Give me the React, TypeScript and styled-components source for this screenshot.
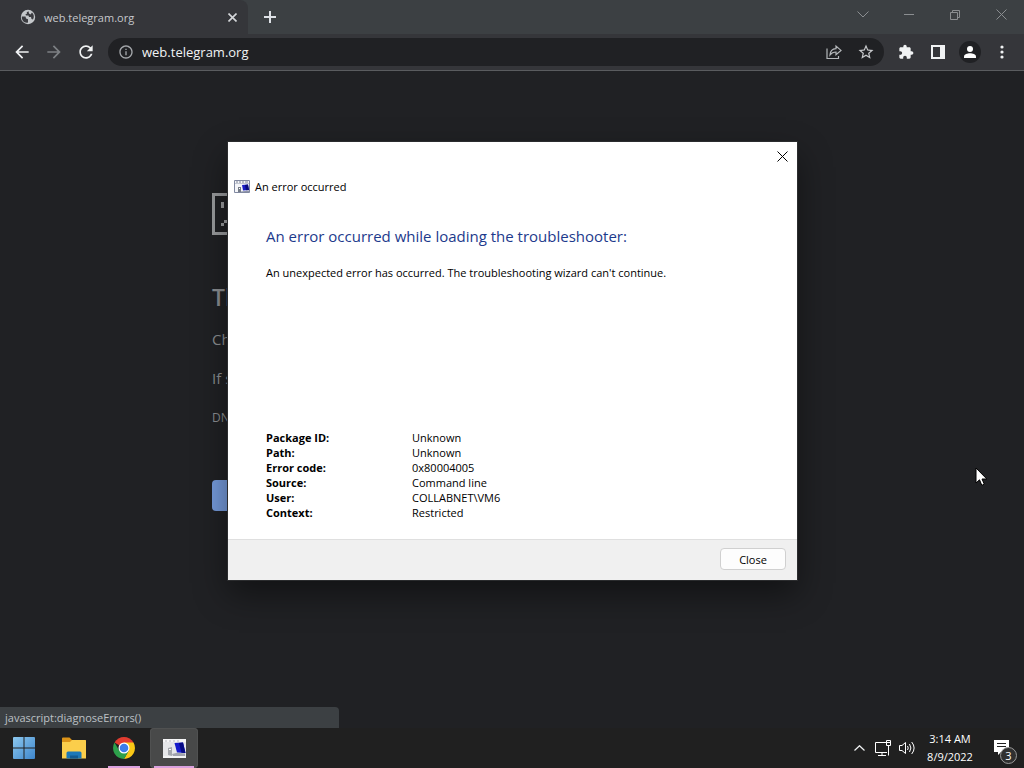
import React from "react";
import styled, { createGlobalStyle } from "styled-components";

const GlobalStyle = createGlobalStyle`
  * { box-sizing: border-box; }
  body {
    margin: 0;
    background: #202124;
    font-family: "Open Sans", "Noto Sans", sans-serif;
    font-size: 11px;
  }
  button { font: inherit; color: inherit; }
  svg { display: block; flex: none; }
`;

const Desktop = styled.div`
  position: relative;
  display: flex;
  flex-direction: column;
  min-height: 100vh;
  overflow: hidden;
`;

const Browser = styled.div`
  position: relative;
  flex: 1;
  display: flex;
  flex-direction: column;
  background: #202124;
`;

const TabStrip = styled.header`
  display: flex;
  height: 34px;
  background: #3c4043;
  color: #dee1e6;
`;

const Tab = styled.div`
  display: flex;
  align-items: center;
  gap: 8px;
  width: 248px;
  padding: 0 8px 0 20px;
  border-radius: 0 8px 0 0;
  background: #35363a;
  color: #c6c8cb;
`;

const TabTitle = styled.span`
  flex: 1;
`;

const IconButton = styled.button<{ $w?: number; $h?: number; $color?: string }>`
  display: flex;
  align-items: center;
  justify-content: center;
  width: ${(p) => p.$w ?? 32}px;
  height: ${(p) => p.$h ?? 32}px;
  padding: 0;
  border: 0;
  background: none;
  color: ${(p) => p.$color ?? "#f1f3f4"};
`;

const WindowControls = styled.div`
  display: flex;
  margin-left: auto;
`;

const Toolbar = styled.nav`
  display: flex;
  align-items: center;
  height: 37px;
  padding: 0 6px;
  background: #35363a;
  border-bottom: 1px solid #5a5c5f;
`;

const AddressBar = styled.div`
  flex: 1;
  display: flex;
  align-items: center;
  height: 28px;
  margin: 0 6px;
  padding: 0 2px 0 10px;
  border-radius: 14px;
  background: #202124;
`;

const AddressInput = styled.input`
  flex: 1;
  min-width: 0;
  margin-left: 8px;
  padding: 0;
  border: 0;
  outline: 0;
  background: none;
  color: #f1f3f4;
  font: inherit;
  font-size: 13px;
`;

const ErrorPage = styled.main`
  width: 100%;
  max-width: 600px;
  margin: 0 auto;
  padding-top: 122px;
  color: #8b8e91;
  line-height: 24px;
`;

const ErrorTitle = styled.h1`
  margin: 50px 0 0;
  font-size: 23px;
  font-weight: 600;
  line-height: 24px;
`;

const ErrorText = styled.p<{ $gap: number; $small?: boolean }>`
  margin: ${(p) => p.$gap}px 0 0;
  font-size: ${(p) => (p.$small ? 12 : 15)}px;
`;

const ReloadButton = styled.button`
  width: 72px;
  height: 31px;
  margin-top: 50px;
  border: 0;
  border-radius: 4px;
  background: #759bdc;
`;

const StatusBubble = styled.div`
  position: absolute;
  left: 0;
  bottom: 0;
  width: 339px;
  height: 21px;
  padding-left: 5px;
  border-radius: 0 4px 0 0;
  background: #3c4043;
  color: #bdc1c6;
  line-height: 21px;
`;

const Dialog = styled.section`
  position: absolute;
  left: 228px;
  top: 142px;
  width: 569px;
  display: flex;
  flex-direction: column;
  background: #fff;
  color: #000;
  box-shadow: 0 0 0 1px #2b2c2e, 0 14px 32px rgba(0, 0, 0, 0.45);
`;

const DialogBar = styled.div`
  display: flex;
  justify-content: flex-end;
`;

const DialogTitle = styled.div`
  display: flex;
  align-items: center;
  gap: 5px;
  height: 33px;
  padding-left: 6px;
`;

const DialogBody = styled.div`
  padding: 21px 38px 19px;
`;

const DialogHeading = styled.h2`
  margin: 0;
  color: #1d3a8c;
  font-size: 15px;
  font-weight: 400;
  line-height: 24px;
`;

const DialogMessage = styled.p`
  margin: 17px 0 149px;
  line-height: 16px;
`;

const Details = styled.table`
  border-collapse: collapse;
  line-height: 15px;
  th, td { padding: 0; text-align: left; }
  th { width: 146px; font-weight: 700; }
`;

const DialogFooter = styled.footer`
  display: flex;
  justify-content: flex-end;
  padding: 8px 11px 10px;
  border-top: 1px solid #dfdfdf;
  background: #f0f0f0;
`;

const CloseButton = styled.button`
  width: 66px;
  height: 22px;
  padding: 0;
  border: 1px solid #d0d0d0;
  border-radius: 4px;
  background: #fdfdfd;
`;

const Taskbar = styled.footer`
  display: flex;
  height: 40px;
  background: #202020;
  color: #fff;
`;

const TaskButton = styled.button<{ $open?: boolean; $active?: boolean }>`
  display: flex;
  align-items: center;
  justify-content: center;
  width: 48px;
  height: 40px;
  margin-right: 2px;
  padding: 0;
  border: 0;
  border-radius: 4px;
  background: ${(p) => (p.$active ? "#484949" : "none")};
  box-shadow: ${(p) => (p.$active ? "inset 0 0 0 1px #505151" : "none")};
  position: relative;
  &::after {
    content: "";
    display: ${(p) => (p.$open ? "block" : "none")};
    position: absolute;
    left: ${(p) => (p.$active ? 4 : 8)}px;
    right: ${(p) => (p.$active ? 4 : 8)}px;
    bottom: 0;
    height: 2px;
    background: #d9a0de;
  }
`;

const Tray = styled.div`
  display: flex;
  align-items: center;
  margin-left: auto;
`;

const Clock = styled.time`
  width: 62px;
  line-height: 18px;
  text-align: center;
`;

const Notifications = styled.button`
  position: relative;
  width: 43px;
  height: 40px;
  padding: 0 0 0 13px;
  border: 0;
  background: none;
`;

const Badge = styled.span`
  position: absolute;
  right: 7px;
  bottom: 4px;
  width: 17px;
  height: 17px;
  border: 1px solid #9a9a9a;
  border-radius: 50%;
  background: #303030;
  color: #fff;
  line-height: 15px;
  text-align: center;
`;

const Pointer = styled.svg`
  position: absolute;
  left: 975px;
  top: 467px;
`;

const Globe = () => (
  <svg width="16" height="16" viewBox="0 0 16 16">
    <circle cx="8" cy="8" r="7.2" fill="#c4c7ca" />
    <path d="M1.800 7.500H5.500L6 9.500L8 10.200V13.500C4.500 14.500 1.500 11.500 1.800 7.500Z M8.500 2.200L6.800 3.200V5H5.500L6 6.500H8.500L9 8H11L11.500 10L13 10.500C14.500 8 14 5 12 3.500L10.500 5.500L9 4.500Z" fill="#3b3c40" />
  </svg>
);

const Cross = ({ size, width = 1 }: { size: number; width?: number }) => (
  <svg width={size} height={size} viewBox={`0 0 ${size} ${size}`} fill="none" stroke="currentColor" strokeWidth={width}>
    <path d={`M.5 .5 L${size - 0.5} ${size - 0.5} M${size - 0.5} .5 L.5 ${size - 0.5}`} />
  </svg>
);

const Material = ({ d, size = 20 }: { d: string; size?: number }) => (
  <svg width={size} height={size} viewBox="0 0 24 24" fill="currentColor">
    <path d={d} />
  </svg>
);

const ARROW_BACK = "M20 11H7.83l5.59-5.59L12 4l-8 8 8 8 1.41-1.41L7.83 13H20v-2z";
const ARROW_FORWARD = "M12 4l-1.41 1.41L16.17 11H4v2h12.17l-5.58 5.59L12 20l8-8z";
const REFRESH =
  "M17.65 6.35C16.2 4.9 14.21 4 12 4c-4.42 0-7.99 3.58-7.99 8s3.57 8 7.99 8c3.73 0 6.84-2.55 7.73-6h-2.08c-.82 2.33-3.04 4-5.65 4-3.31 0-6-2.69-6-6s2.69-6 6-6c1.66 0 3.14.69 4.22 1.78L13 11h7V4l-2.35 2.35z";
const INFO =
  "M11 7h2v2h-2zm0 4h2v6h-2zm1-9C6.48 2 2 6.48 2 12s4.48 10 10 10 10-4.48 10-10S17.52 2 12 2zm0 18c-4.41 0-8-3.59-8-8s3.59-8 8-8 8 3.59 8 8-3.59 8-8 8z";
const STAR =
  "M22 9.24l-7.19-.62L12 2 9.19 8.63 2 9.24l5.46 4.73L5.82 21 12 17.27 18.18 21l-1.63-7.03L22 9.24zM12 15.4l-3.76 2.27 1-4.28-3.32-2.88 4.38-.38L12 6.1l1.71 4.04 4.38.38-3.32 2.88 1 4.28L12 15.4z";
const PUZZLE =
  "M20.5 11H19V7c0-1.1-.9-2-2-2h-4V3.5C13 2.12 11.88 1 10.5 1S8 2.12 8 3.5V5H4c-1.1 0-1.99.9-1.99 2v3.8H3.5c1.49 0 2.7 1.21 2.7 2.7s-1.21 2.7-2.7 2.7H2V20c0 1.1.9 2 2 2h3.8v-1.5c0-1.49 1.21-2.7 2.7-2.7s2.7 1.21 2.7 2.7V22H17c1.1 0 2-.9 2-2v-4h1.5c1.38 0 2.5-1.12 2.5-2.5S21.88 11 20.5 11z";

const Share = () => (
  <svg width="16" height="16" viewBox="0 0 16 16" fill="none" stroke="currentColor" strokeWidth="1.2">
    <path d="M1 4.5V14.5H12.5V12" />
    <path d="M4 11 C4.2 7 6.5 4.8 10 4.6 V2 L15 6.4 L10 10.6 V8 C7.5 8 5.6 8.8 4 11Z" />
  </svg>
);

const SidePanel = () => (
  <svg width="14" height="14" viewBox="0 0 14 14">
    <path fillRule="evenodd" fill="#f1f3f4" d="M0 0H14V14H0Z M2 2V12H9V2Z" />
  </svg>
);

const Avatar = () => (
  <svg width="22" height="22" viewBox="0 0 22 22">
    <circle cx="11" cy="11" r="11" fill="#202124" />
    <circle cx="11" cy="8" r="3" fill="#fff" />
    <path d="M5 17V15.5C5 13 8.5 12.2 11 12.2S17 13 17 15.5V17Z" fill="#fff" />
  </svg>
);

const Dots = () => (
  <svg width="4" height="14" viewBox="0 0 4 14" fill="#f1f3f4">
    <circle cx="2" cy="2" r="1.6" />
    <circle cx="2" cy="7" r="1.6" />
    <circle cx="2" cy="12" r="1.6" />
  </svg>
);

const SadFile = () => (
  <svg width="42" height="42" viewBox="0 0 42 42">
    <path d="M1.5 1.5H40.5V40.5H1.5Z" fill="none" stroke="#9a9c9e" strokeWidth="3" />
    <path d="M9 9h3v6H9z M30 9h3v6h-3z M9 30h3v3H9z M12 27h18v3H12z M30 30h3v3h-3z" fill="#9a9c9e" />
  </svg>
);

const TitleIcon = () => (
  <svg width="16" height="13" viewBox="0 0 16 13">
    <path d="M.5 .5H15.500V12.500H.5Z" fill="#f4f5f9" stroke="#8088a0" />
    <path d="M1 3.500H15" stroke="#c3c8d4" />
    <path d="M2 2H4M5 2H7M8 2H10M11 2H14" stroke="#7b8190" />
    <path d="M4 7H7V12H4Z" fill="#747b86" />
    <path d="M5 8.500H6" stroke="#fff" />
    <path d="M8 5L14 4.500L15 10L9 10.500Z" fill="#1a1cc4" />
    <path d="M11 5L14 4.500L15 10L12 10.200Z" fill="#080b7c" />
    <path d="M7 11.500L15 10.500V12H7Z" fill="#8f95a8" />
  </svg>
);

const Wizard = () => (
  <svg width="23" height="19" viewBox="0 0 23 19">
    <rect width="23" height="19" fill="#e6e7ea" />
    <path d="M0 0H23V3H0Z" fill="#f6f6f7" />
    <path d="M2 2H4M6 2H8M10 2H12M14 2H16" stroke="#b8bac0" />
    <path d="M5 9L9 8V17L5 16Z" fill="#a5a8ae" />
    <path d="M6 10.500H8" stroke="#fff" />
    <path d="M11.500 4L20 3.500L22.500 14L14 13.500Z" fill="#171bcb" />
    <path d="M16 4L20 3.500L22.500 14L18.500 13.800Z" fill="#060a84" />
    <path d="M9 15L14 13.800L22 14.500V17H10Z" fill="#a0a3ae" />
    <path d="M0 18H23" stroke="#fff" />
  </svg>
);

const StartLogo = () => (
  <svg width="22" height="22" viewBox="0 0 22 22">
    <defs>
      <linearGradient id="start" x1="0" y1="0" x2="1" y2="1">
        <stop offset="0" stopColor="#8cc8ee" />
        <stop offset="1" stopColor="#3e86cc" />
      </linearGradient>
    </defs>
    <path fill="url(#start)" d="M1 0H10.5V10.5H0V1Q0 0 1 0Z M11.5 0H21Q22 0 22 1V10.5H11.5Z M0 11.5H10.5V22H1Q0 22 0 21Z M11.5 11.5H22V21Q22 22 21 22H11.5Z" />
  </svg>
);

const Folder = () => (
  <svg width="24" height="22" viewBox="0 0 24 22">
    <path d="M0 1.5Q0 .5 1 .5H7.5L10 3H23Q24 3 24 4V8H0Z" fill="#dc9418" />
    <path d="M0 5H8L10 3H23Q24 3 24 4V21.5H0Z" fill="#fbce4b" />
    <path d="M4.500 21.500V16Q4.500 14.500 6 14.500H18Q19.500 14.500 19.500 16V21.500Z" fill="#1c78b8" />
    <path d="M8 18.500H16V21.500H8Z" fill="#125a91" />
  </svg>
);

const Chrome = () => (
  <svg width="24" height="24" viewBox="0 0 24 24">
    <path d="M12 12L2.500 6.500A11 11 0 0 1 21.500 6.500Z" fill="#e23c30" />
    <path d="M12 6.500H21.500A11 11 0 0 1 12 23L16.700 14.700Z" fill="#fbc816" />
    <path d="M2.500 6.500L7.300 14.700L12 17L16.700 14.700L12 23A11 11 0 0 1 2.500 6.500Z" fill="#2da04b" />
    <circle cx="12" cy="12" r="5.500" fill="#fff" />
    <circle cx="12" cy="12" r="4.300" fill="#3b7de9" />
  </svg>
);

const Network = () => (
  <svg width="16" height="17" viewBox="0 0 16 17" fill="none" stroke="#fff">
    <path d="M11 2.500H.5V12.500H12 M7 12.500V15.500 M3 15.500H11" />
    <path d="M11.500 .5H15.500V5.500H11.500Z M13.500 5.500V15.500 M11.500 2.500H15.500" />
  </svg>
);

const Volume = () => (
  <svg width="17" height="14" viewBox="0 0 17 14" fill="none" stroke="#fff">
    <path d="M.5 4.500H3L6.500 1.500V12.500L3 9.500H.5Z" />
    <path d="M8.500 5Q10 7 8.500 9 M10.500 3Q13.300 7 10.500 11 M12.700 1Q17.500 7 12.700 13" />
  </svg>
);

const details = [
  ["Package ID:", "Unknown"],
  ["Path:", "Unknown"],
  ["Error code:", "0x80004005"],
  ["Source:", "Command line"],
  ["User:", "COLLABNET\\VM6"],
  ["Context:", "Restricted"],
];

export default function App() {
  return (
    <Desktop>
      <GlobalStyle />
      <Browser>
        <TabStrip>
          <Tab>
            <Globe />
            <TabTitle>web.telegram.org</TabTitle>
            <IconButton $w={16} $h={16} $color="#d5d7da" aria-label="Close tab">
              <Cross size={9} width={1.6} />
            </IconButton>
          </Tab>
          <IconButton $w={44} $h={34} $color="#dee1e6" aria-label="New tab">
            <svg width="12" height="12" viewBox="0 0 12 12" stroke="currentColor" strokeWidth="2">
              <path d="M6 0V12M0 6H12" />
            </svg>
          </IconButton>
          <WindowControls>
            <IconButton $w={46} $h={29} $color="#8b8e91" aria-label="Search tabs">
              <svg width="12" height="7" viewBox="0 0 12 7" fill="none" stroke="currentColor">
                <path d="M.5 .5L6 6L11.500 .5" />
              </svg>
            </IconButton>
            <IconButton $w={46} $h={29} $color="#8b8e91" aria-label="Minimize">
              <svg width="10" height="1" viewBox="0 0 10 1">
                <path d="M0 0H10V1H0Z" fill="currentColor" />
              </svg>
            </IconButton>
            <IconButton $w={46} $h={29} $color="#8b8e91" aria-label="Restore">
              <svg width="10" height="10" viewBox="0 0 10 10" fill="none" stroke="currentColor">
                <path d="M.5 2.500H7.500V9.500H.5Z M2.500 2.500V.5H9.500V7.500H7.500" />
              </svg>
            </IconButton>
            <IconButton $w={46} $h={29} $color="#8b8e91" aria-label="Close window">
              <Cross size={11} />
            </IconButton>
          </WindowControls>
        </TabStrip>
        <Toolbar>
          <IconButton aria-label="Back"><Material d={ARROW_BACK} /></IconButton>
          <IconButton $color="#7d8084" aria-label="Forward"><Material d={ARROW_FORWARD} /></IconButton>
          <IconButton aria-label="Reload"><Material d={REFRESH} /></IconButton>
          <AddressBar>
            <IconButton $w={16} $color="#a5a8ac" aria-label="Site information"><Material d={INFO} size={16} /></IconButton>
            <AddressInput aria-label="Address" defaultValue="web.telegram.org" />
            <IconButton $color="#b4b7ba" aria-label="Share"><Share /></IconButton>
            <IconButton $color="#c8cacd" aria-label="Bookmark"><Material d={STAR} size={18} /></IconButton>
          </AddressBar>
          <IconButton aria-label="Extensions"><Material d={PUZZLE} size={16} /></IconButton>
          <IconButton aria-label="Side panel"><SidePanel /></IconButton>
          <IconButton aria-label="Profile"><Avatar /></IconButton>
          <IconButton aria-label="Menu"><Dots /></IconButton>
        </Toolbar>
        <ErrorPage>
          <SadFile />
          <ErrorTitle>Th</ErrorTitle>
          <ErrorText $gap={18}>Ch</ErrorText>
          <ErrorText $gap={15}>If s</ErrorText>
          <ErrorText $gap={16} $small>DN</ErrorText>
          <ReloadButton aria-label="Reload page" />
        </ErrorPage>
        <StatusBubble>javascript:diagnoseErrors()</StatusBubble>
      </Browser>
      <Dialog role="dialog" aria-labelledby="dialog-title">
        <DialogBar>
          <IconButton $w={30} $h={28} $color="#000" aria-label="Close dialog"><Cross size={11} /></IconButton>
        </DialogBar>
        <DialogTitle>
          <TitleIcon />
          <span id="dialog-title">An error occurred</span>
        </DialogTitle>
        <DialogBody>
          <DialogHeading>An error occurred while loading the troubleshooter:</DialogHeading>
          <DialogMessage>An unexpected error has occurred. The troubleshooting wizard can't continue.</DialogMessage>
          <Details>
            <tbody>
              {details.map(([name, value]) => (
                <tr key={name}>
                  <th scope="row">{name}</th>
                  <td>{value}</td>
                </tr>
              ))}
            </tbody>
          </Details>
        </DialogBody>
        <DialogFooter>
          <CloseButton>Close</CloseButton>
        </DialogFooter>
      </Dialog>
      <Taskbar>
        <TaskButton aria-label="Start"><StartLogo /></TaskButton>
        <TaskButton aria-label="File Explorer"><Folder /></TaskButton>
        <TaskButton $open aria-label="Chrome"><Chrome /></TaskButton>
        <TaskButton $open $active aria-label="Troubleshooter"><Wizard /></TaskButton>
        <Tray>
          <IconButton $w={24} aria-label="Show hidden icons">
            <svg width="11" height="6" viewBox="0 0 11 6" fill="none" stroke="currentColor" strokeWidth="1.2">
              <path d="M.5 5.500L5.500 .7L10.500 5.500" />
            </svg>
          </IconButton>
          <IconButton $w={24} aria-label="Network"><Network /></IconButton>
          <IconButton $w={24} aria-label="Volume"><Volume /></IconButton>
          <Clock>3:14 AM<br />8/9/2022</Clock>
          <Notifications aria-label="3 notifications">
            <svg width="15" height="16" viewBox="0 0 15 16">
              <path d="M0 0H15V12H7L4 15V12H0Z" fill="#fff" />
              <path d="M3 3.500H12M3 6.500H12" stroke="#202020" />
            </svg>
            <Badge>3</Badge>
          </Notifications>
        </Tray>
      </Taskbar>
      <Pointer width="13" height="20" viewBox="0 0 13 20">
        <path d="M1 1V16L4.500 12.800L6.800 18.300L9.300 17.200L7 12H11.800Z" fill="#fff" stroke="#000" />
      </Pointer>
    </Desktop>
  );
}
